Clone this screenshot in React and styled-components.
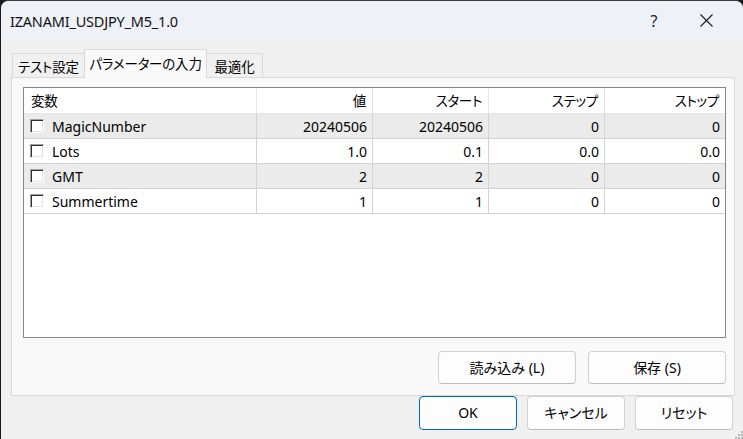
import React from "react";
import styled, { createGlobalStyle } from "styled-components";

const GlobalStyle = createGlobalStyle`
  html, body { margin: 0; padding: 0; background: #1b1b1b; }
  body {
    font-family: "Noto Sans", "Noto Sans CJK JP", sans-serif;
    font-feature-settings: "palt";
    color: #000;
  }
  * { box-sizing: border-box; }
`;

const Window = styled.div`
  position: relative;
  width: 742px;
  height: 439px;
  margin-left: 1px;
  background: #f0f0f0;
  border-radius: 8px 8px 0 0;
  overflow: hidden;
  display: flex;
  flex-direction: column;
  border-top: 1px solid #3a3a3a;
`;

const TitleBar = styled.div`
  height: 39px;
  flex: none;
  display: flex;
  align-items: center;
  background: #eef2f8;
  padding-left: 9px;
`;

const Title = styled.div`
  flex: 1;
  font-size: 14.5px;
  color: #111;
  letter-spacing: -0.2px;
`;

const TitleButton = styled.div`
  width: ${(p) => p.$w}px;
  height: 39px;
  display: flex;
  align-items: center;
  justify-content: center;
  font-size: 16px;
  color: #222;
`;

const TabStrip = styled.div`
  display: flex;
  align-items: flex-end;
  height: 29px;
  margin-top: 9px;
  padding-left: 11px;
  position: relative;
  z-index: 1;
`;

const Tab = styled.div`
  height: ${(p) => (p.$active ? 29 : 25)}px;
  width: ${(p) => p.$w}px;
  display: flex;
  align-items: center;
  justify-content: center;
  font-size: 13.5px;
  letter-spacing: -0.2px;
  border: 1px solid #d9d9d9;
  border-bottom: ${(p) => (p.$active ? "none" : "1px solid #d9d9d9")};
  background: ${(p) => (p.$active ? "#f9f9f9" : "#f0f0f0")};
  margin-left: ${(p) => (p.$active ? -1 : 0)}px;
  margin-right: ${(p) => (p.$active ? -1 : 0)}px;
  position: relative;
  z-index: ${(p) => (p.$active ? 2 : 1)};
  padding-bottom: ${(p) => (p.$active ? 3 : 0)}px;
  color: #000;
`;

const Panel = styled.div`
  margin: -1px 8px 0 10px;
  height: 319px;
  flex: none;
  background: #f9f9f9;
  border: 1px solid #d9d9d9;
  padding: 9px 8px 11px 11px;
  display: flex;
  flex-direction: column;
`;

const ListView = styled.div`
  height: 251px;
  flex: none;
  background: #fff;
  border: 1px solid #828790;
  display: flex;
  flex-direction: column;
`;

const cols = "233px 116px 116px 116px 1fr";

const HeaderRow = styled.div`
  display: grid;
  grid-template-columns: ${cols};
  height: 26px;
  border-bottom: 1px solid #e5e5e5;
`;

const HeaderCell = styled.div`
  display: flex;
  align-items: center;
  justify-content: ${(p) => (p.$left ? "flex-start" : "flex-end")};
  padding: ${(p) => (p.$left ? "0 0 1px 7px" : "0 6px 1px 0")};
  border-right: 1px solid #e5e5e5;
  font-size: 13.5px;
  letter-spacing: -0.3px;
  color: #000;
  &:last-child { border-right: none; }
`;

const Row = styled.div`
  display: grid;
  grid-template-columns: ${cols};
  height: 25px;
  border-bottom: 1px solid #d2d2d2;
  background: ${(p) => (p.$shaded ? "#ebebeb" : "#fff")};
`;

const Cell = styled.div`
  display: flex;
  align-items: center;
  justify-content: ${(p) => (p.$left ? "flex-start" : "flex-end")};
  padding: ${(p) => (p.$left ? "0 0 0 6px" : "0 5px 0 0")};
  border-right: 1px solid #d2d2d2;
  font-size: 14px;
  color: #000;
  &:last-child { border-right: none; }
`;

const Check = styled.span`
  width: 14px;
  height: 14px;
  flex: none;
  margin-right: 8px;
  background: #fff;
  border: 1px solid;
  border-color: #a0a0a0 #fff #fff #a0a0a0;
  box-shadow: inset 1px 1px 0 #303030, inset -1px -1px 0 #e3e3e3;
`;

const ButtonRow = styled.div`
  display: flex;
  justify-content: flex-end;
  gap: ${(p) => p.$gap}px;
  margin-top: ${(p) => p.$mt || 0}px;
  padding-right: ${(p) => p.$pr || 0}px;
`;

const Button = styled.button`
  width: ${(p) => p.$w}px;
  height: ${(p) => p.$h}px;
  border-radius: 4px;
  background: #fdfdfd;
  border: 1px solid ${(p) => (p.$primary ? "#0067c0" : "#d0d0d0")};
  border-bottom-color: ${(p) => (p.$primary ? "#0067c0" : "#bcbcbc")};
  font-family: inherit;
  font-feature-settings: "palt";
  font-size: 14px;
  color: #000;
  padding: 0 0 2px;
  display: flex;
  align-items: center;
  justify-content: center;
`;

const Grip = styled.svg`
  position: absolute;
  right: 0;
  bottom: 0;
`;

const params = [
  ["MagicNumber", "20240506", "20240506", "0", "0"],
  ["Lots", "1.0", "0.1", "0.0", "0.0"],
  ["GMT", "2", "2", "0", "0"],
  ["Summertime", "1", "1", "0", "0"],
];

export default function App() {
  return (
    <>
      <GlobalStyle />
      <Window>
        <TitleBar>
          <Title>IZANAMI_USDJPY_M5_1.0</Title>
          <TitleButton $w={46}>?</TitleButton>
          <TitleButton $w={58}>
            <svg width="13" height="13" viewBox="0 0 13 13">
              <path d="M0.5 0.5 L12.5 12.5 M12.5 0.5 L0.5 12.5" stroke="#1a1a1a" strokeWidth="1.1" />
            </svg>
          </TitleButton>
          <div style={{ width: 8 }} />
        </TitleBar>
        <TabStrip>
          <Tab $w={73}>テスト設定</Tab>
          <Tab $w={123} $active>パラメーターの入力</Tab>
          <Tab $w={57}>最適化</Tab>
        </TabStrip>
        <Panel>
          <ListView>
            <HeaderRow>
              <HeaderCell $left>変数</HeaderCell>
              <HeaderCell>値</HeaderCell>
              <HeaderCell>スタート</HeaderCell>
              <HeaderCell>ステップ</HeaderCell>
              <HeaderCell>ストップ</HeaderCell>
            </HeaderRow>
            {params.map((r, i) => (
              <Row key={r[0]} $shaded={i % 2 === 0}>
                <Cell $left>
                  <Check />
                  {r[0]}
                </Cell>
                <Cell>{r[1]}</Cell>
                <Cell>{r[2]}</Cell>
                <Cell>{r[3]}</Cell>
                <Cell>{r[4]}</Cell>
              </Row>
            ))}
          </ListView>
          <ButtonRow $gap={12} $mt={13}>
            <Button $w={138} $h={33}>読み込み (L)</Button>
            <Button $w={138} $h={33}>保存 (S)</Button>
          </ButtonRow>
        </Panel>
        <ButtonRow $gap={10} $pr={10}>
          <Button $w={98} $h={34} $primary>OK</Button>
          <Button $w={98} $h={34}>キャンセル</Button>
          <Button $w={98} $h={34}>リセット</Button>
        </ButtonRow>
        <Grip width="9" height="8" viewBox="0 0 9 8">
          {[[7, 0], [4, 3], [7, 3], [1, 6], [4, 6], [7, 6]].map(([x, y], i) => (
            <rect key={i} x={x} y={y} width="2" height="2" fill="#b5b5b5" />
          ))}
        </Grip>
      </Window>
    </>
  );
}
